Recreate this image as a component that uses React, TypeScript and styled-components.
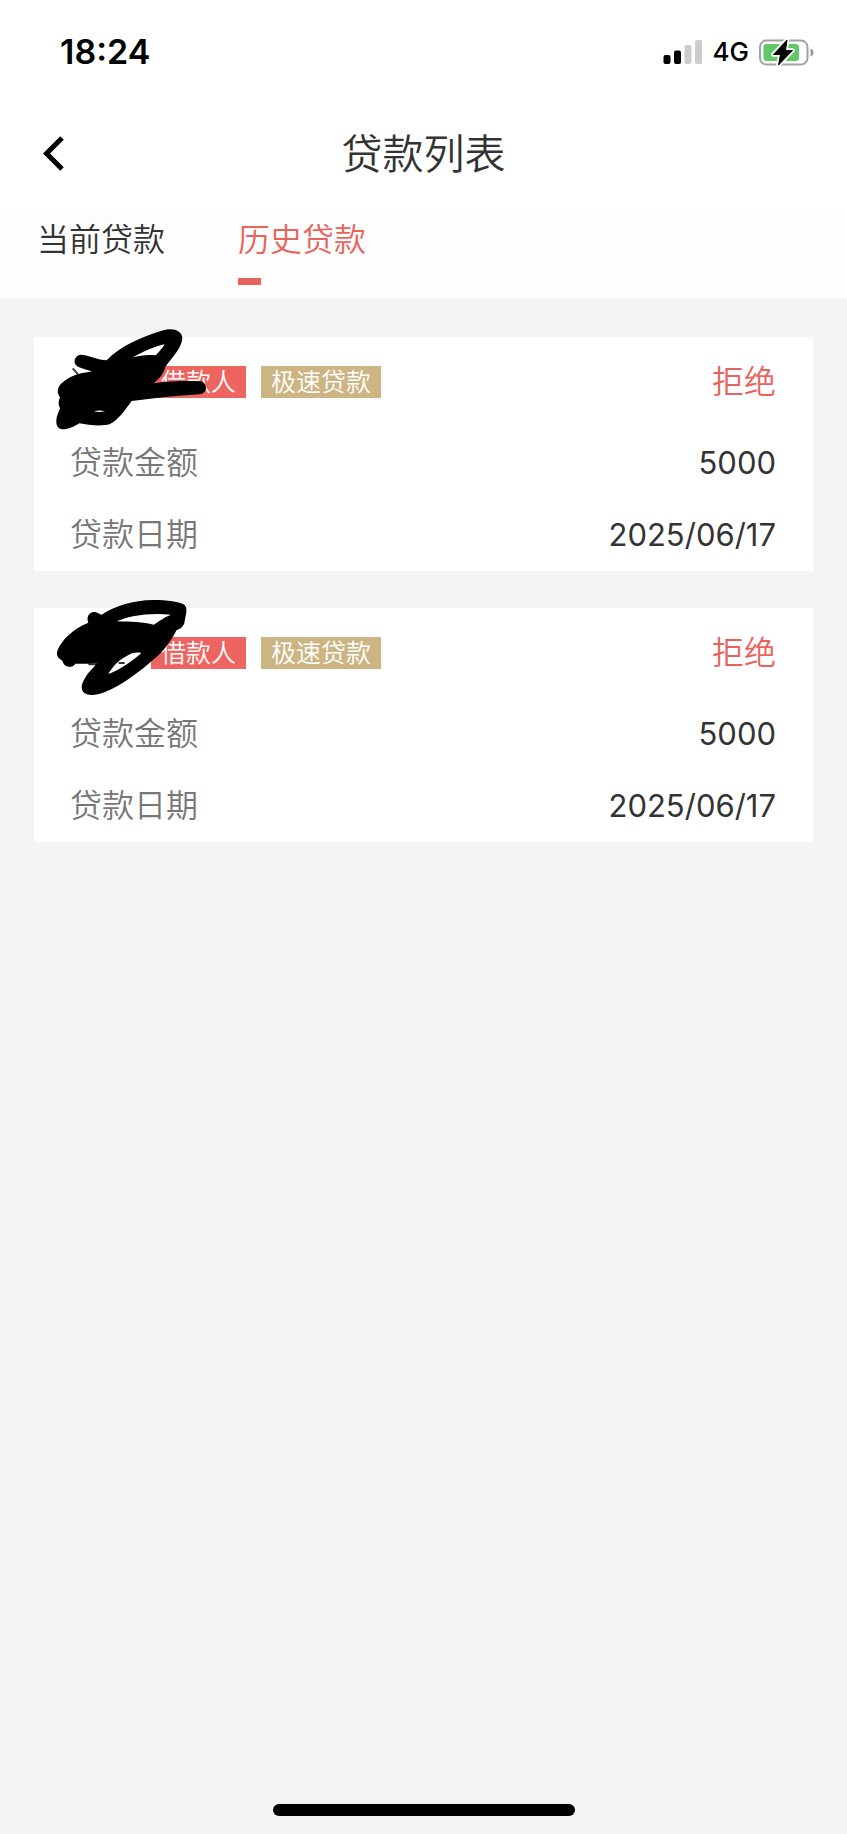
import React, { useState } from "react";
import styled, { createGlobalStyle } from "styled-components";

const GlobalStyle = createGlobalStyle`
  *, *::before, *::after { box-sizing: border-box; }
  body {
    margin: 0;
    background: #f4f4f4;
    color: #333;
    font-family: Inter, "Noto Sans CJK SC", sans-serif;
    font-size: 32px;
    font-weight: 350;
    line-height: 48px;
  }
  button { font: inherit; color: inherit; background: none; border: 0; padding: 0; cursor: pointer; }
  h1, dl, dt, dd, ul { margin: 0; padding: 0; font-weight: inherit; }
`;

const Screen = styled.div`
  display: flex;
  flex-direction: column;
  min-height: 100vh;
`;

const StatusBar = styled.div`
  display: flex;
  align-items: center;
  justify-content: space-between;
  height: 104px;
  padding: 0 31px 0 60px;
  background: #fff;
  color: #000;
`;

const Clock = styled.time`
  font-size: 34px;
  font-weight: 600;
`;

const Indicators = styled.div`
  display: flex;
  align-items: center;
  gap: 10px;
`;

const Network = styled.span`
  font-size: 26px;
  font-weight: 450;
`;

const NavBar = styled.header`
  display: grid;
  grid-template-columns: 60px 1fr 60px;
  align-items: center;
  height: 104px;
  padding: 0 24px 4px;
  background: #fff;
`;

const BackButton = styled.button`
  display: flex;
  align-items: center;
  justify-content: center;
  height: 60px;
`;

const Title = styled.h1`
  font-size: 41px;
  text-align: center;
`;

const Tabs = styled.nav`
  display: flex;
  gap: 73px;
  height: 90px;
  padding: 8px 37px 0;
  background: #fdfdfd;
`;

const Tab = styled.button<{ $active: boolean }>`
  display: flex;
  flex-direction: column;
  align-items: flex-start;
  gap: 14px;
  color: ${(p) => (p.$active ? "#e9635d" : "#333")};

  &::after {
    content: "";
    width: 23px;
    height: 7px;
    background: ${(p) => (p.$active ? "#e9635d" : "transparent")};
  }
`;

const LoanList = styled.ul`
  display: flex;
  flex: 1;
  flex-direction: column;
  gap: 37px;
  padding: 39px 34px;
  list-style: none;
`;

const Card = styled.li`
  position: relative;
  padding: 0 37px 0 36px;
  background: #fff;
`;

const CardHead = styled.div`
  display: flex;
  align-items: center;
  gap: 15px;
  height: 90px;
`;

const NameSlot = styled.span`
  width: 66px;
`;

const Tag = styled.span<{ $color: string }>`
  padding: 0 10px;
  background: ${(p) => p.$color};
  color: #fff;
  font-size: 25px;
  line-height: 32px;
`;

const State = styled.span`
  margin-left: auto;
  color: #e9635d;
`;

const Field = styled.div`
  display: flex;
  align-items: center;
  justify-content: space-between;
  height: 72px;
`;

const Label = styled.dt`
  color: #777;
`;

const Value = styled.dd`
  font-size: 31px;
  font-weight: 400;
`;

const Scribble = styled.svg`
  position: absolute;
  top: -17px;
  left: -4px;
  pointer-events: none;
`;

const HomeArea = styled.footer`
  display: flex;
  justify-content: center;
  padding: 0 0 18px;
`;

const HomeBar = styled.span`
  width: 302px;
  height: 12px;
  border-radius: 6px;
  background: #000;
`;

function SignalIcon() {
  return (
    <svg width="40" height="26" viewBox="0 0 40 26" aria-hidden="true">
      <rect x="0.5" y="16" width="7" height="9" rx="2" />
      <rect x="11" y="11.5" width="7" height="13.5" rx="2" />
      <rect x="21.5" y="6" width="7" height="19" rx="2" fill="#ccc" />
      <rect x="32" y="1" width="7" height="24" rx="2" fill="#ccc" />
    </svg>
  );
}

function BatteryIcon() {
  const bolt = "M28 1 L14.5 15.5 H21.5 L19.5 26 L33.5 11.5 H26.5 Z";
  return (
    <svg width="57" height="27" viewBox="0 0 57 27" aria-hidden="true">
      <rect x="1" y="1.5" width="47.5" height="24" rx="6.5" fill="#fff" stroke="#a2a2a2" strokeWidth="2" />
      <rect x="4.5" y="5" width="35.5" height="17" rx="3" fill="#62c766" />
      <path d="M51.5 9.5 Q54.5 10.5 54.5 13.5 Q54.5 16.5 51.5 17.5Z" fill="#999" />
      <path d={bolt} fill="#fff" stroke="#fff" strokeWidth="4.5" strokeLinejoin="round" />
      <path d={bolt} stroke="#000" strokeWidth="1" strokeLinejoin="round" />
    </svg>
  );
}

function FirstScribble() {
  return (
    <Scribble width="240" height="120" viewBox="0 0 720 360" aria-hidden="true">
      <path d="M128 145 L143 162" stroke="#444" strokeWidth="6" />
      <path
        fillRule="evenodd"
        d="M152 104 C172 104 205 120 230 121 C270 80 330 52 400 31 C428 22 457 32 457 55 C455 85 425 115 406 140 C400 165 385 178 370 190 C420 182 490 182 512 184 C535 190 533 222 508 223 C440 226 370 236 305 243 C285 270 265 300 240 312 C215 320 175 315 148 310 C125 325 95 335 84 322 C72 305 84 280 90 265 C83 250 87 240 90 232 C78 215 84 200 95 190 C115 170 145 158 185 155 C170 148 150 145 142 139 C128 130 132 106 152 104Z M308 112 C340 95 370 80 404 73 C396 86 386 98 377 106 C355 103 330 106 308 112Z M192 274 C202 271 214 271 225 274 C214 277 202 277 192 274Z"
      />
    </Scribble>
  );
}

function SecondScribble() {
  return (
    <Scribble width="240" height="120" viewBox="0 3 720 360" aria-hidden="true">
      <path d="M175 223 H200 M266 219 H284" fill="none" stroke="#333" strokeWidth="6" />
      <path
        fillRule="evenodd"
        d="M190 66 C203 66 208 73 215 74 C250 50 310 30 370 30 C410 30 450 35 464 45 C474 58 468 70 463 100 C456 115 448 118 440 120 C425 150 400 185 375 205 C330 245 270 290 225 306 C200 316 175 318 163 309 C150 298 155 280 165 265 C175 245 190 236 200 220 C175 222 160 221 136 221 C130 234 103 236 97 212 C84 206 78 195 82 184 C90 155 130 115 175 98 C168 80 178 68 190 66Z M260 94 C300 78 350 68 423 74 C405 80 385 95 372 104 C340 96 300 95 260 94Z M235 252 C245 235 262 212 290 198 C305 188 320 186 334 189 C315 207 270 240 235 252Z"
      />
    </Scribble>
  );
}

const tabs = ["当前贷款", "历史贷款"];

const loans = [
  { id: 1, amount: "5000", date: "2025/06/17", mark: <FirstScribble /> },
  { id: 2, amount: "5000", date: "2025/06/17", mark: <SecondScribble /> },
];

export default function App() {
  const [active, setActive] = useState(1);
  return (
    <Screen>
      <GlobalStyle />
      <StatusBar>
        <Clock>18:24</Clock>
        <Indicators>
          <SignalIcon />
          <Network>4G</Network>
          <BatteryIcon />
        </Indicators>
      </StatusBar>
      <NavBar>
        <BackButton aria-label="返回">
          <svg width="22" height="36" viewBox="0 0 22 36" aria-hidden="true">
            <path d="M19 2 L3.5 17.5 L19 33" fill="none" stroke="#000" strokeWidth="5" />
          </svg>
        </BackButton>
        <Title>贷款列表</Title>
      </NavBar>
      <Tabs>
        {tabs.map((name, i) => (
          <Tab key={name} $active={i === active} onClick={() => setActive(i)}>
            {name}
          </Tab>
        ))}
      </Tabs>
      <LoanList>
        {loans.map((loan) => (
          <Card key={loan.id}>
            <CardHead>
              <NameSlot />
              <Tag $color="#ee6461">借款人</Tag>
              <Tag $color="#cdb583">极速贷款</Tag>
              <State>拒绝</State>
            </CardHead>
            <dl>
              <Field>
                <Label>贷款金额</Label>
                <Value>{loan.amount}</Value>
              </Field>
              <Field>
                <Label>贷款日期</Label>
                <Value>{loan.date}</Value>
              </Field>
            </dl>
            {loan.mark}
          </Card>
        ))}
      </LoanList>
      <HomeArea>
        <HomeBar />
      </HomeArea>
    </Screen>
  );
}
